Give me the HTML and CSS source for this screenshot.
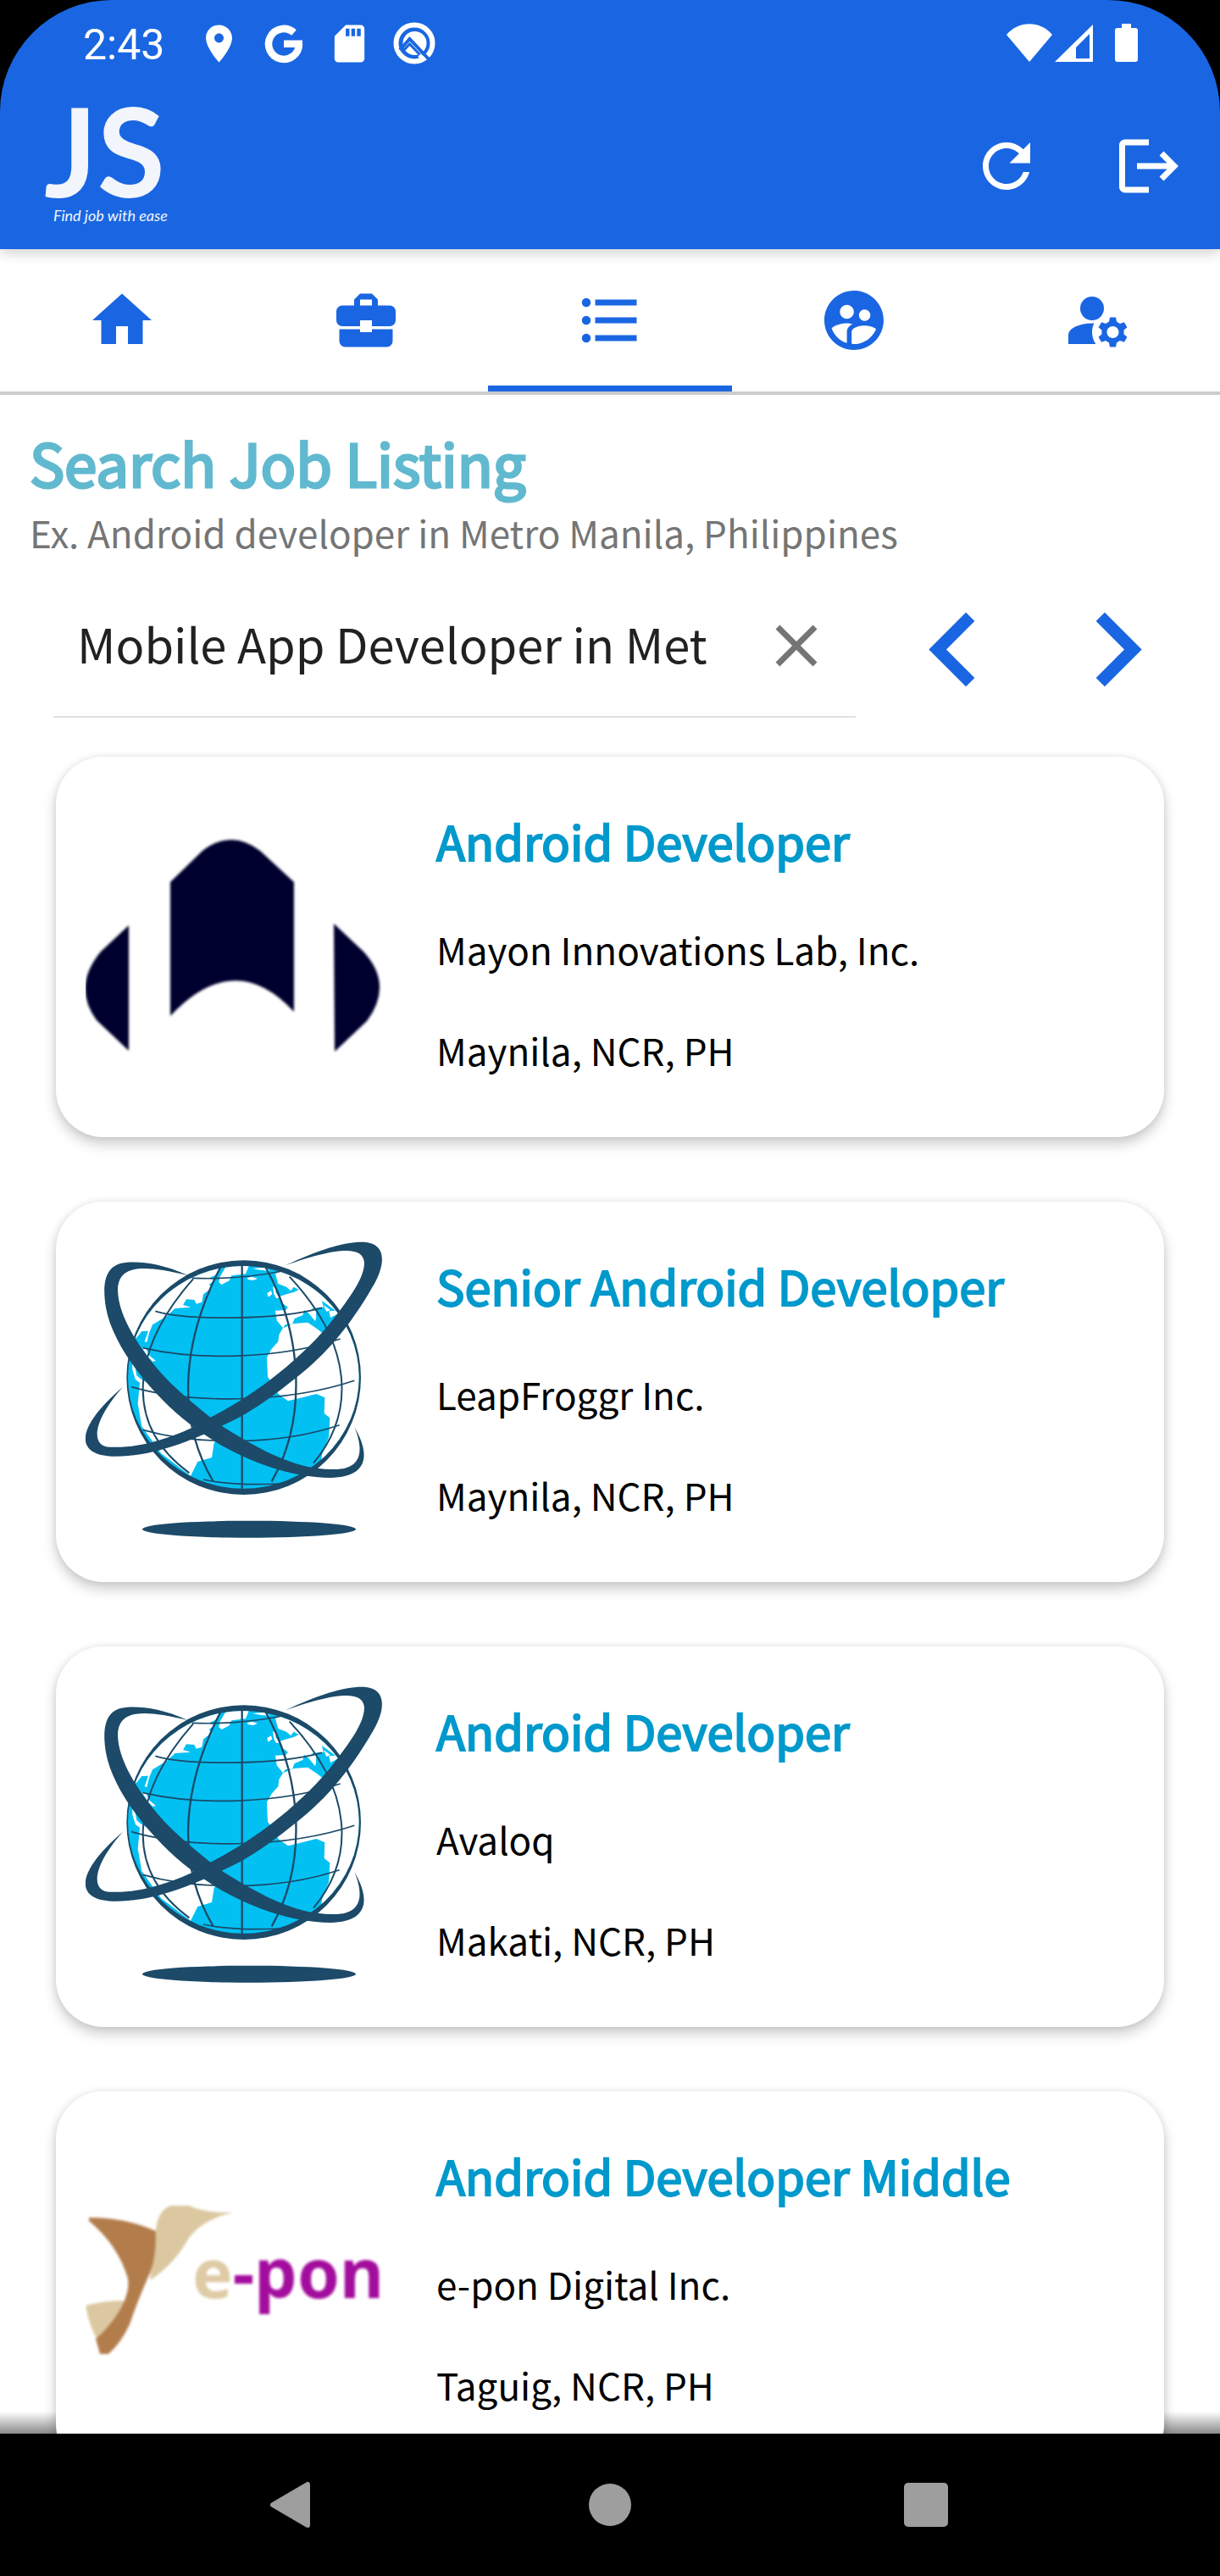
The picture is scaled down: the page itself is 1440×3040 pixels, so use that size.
FILE: index.html
```html
<!DOCTYPE html>
<html lang="en">
<head>
<meta charset="utf-8">
<meta name="viewport" content="width=device-width, initial-scale=1">
<title>Search Job Listing</title>
<link rel="stylesheet" href="styles.css">
</head>
<body>
<svg class="sprite" aria-hidden="true">
  <symbol id="globe" viewBox="63 75 1050 1050">
    <clipPath id="globe-clip"><ellipse cx="622" cy="556" rx="409" ry="394"/></clipPath>
    <circle cx="623" cy="557" r="415" fill="#1c4a68"/>
    <g clip-path="url(#globe-clip)">
      <rect x="200" y="140" width="850" height="840" fill="#03c0f2"/>
      <g fill="#fff">
        <path d="M150 100H560L540 172 528 192 500 205 520 212 500 228 510 240 480 262 475 290 455 296 448 282 420 280 408 300 436 308 380 312 350 340 300 370 288 400 280 432 272 430 285 392 262 393 245 415 210 440Z"/>
        <path d="M228 490 238 515 244 550 256 560 272 570 330 610 440 700 540 760 518 788 510 840 490 846 460 855 435 905 330 825 262 730 248 650 255 575 240 565 229 530ZM262 450 276 452 290 480 312 498 300 500 284 484Z"/>
        <path d="M535 220 538 202 552 178 562 160H642L630 190 580 196 572 214 545 228ZM636 204 652 200 672 207 656 213 638 210ZM655 172 700 166 716 180 680 176Z"/>
        <path d="M706 258 720 250 724 262 710 272ZM726 235 738 238 736 256 752 275 738 276 730 262Z"/>
        <path d="M735 190 760 178 790 195 900 200 1060 330V720L895 880 900 830 925 765 928 700 908 684 910 628 880 615 830 628 780 640 745 615 735 590 708 555 705 485 722 455 745 430 748 405 762 382 740 355 735 320 772 318 780 308 755 290 750 270 775 262 800 255 818 246 800 236 790 250 774 236 745 225Z"/>
      </g>
      <path fill="#03c0f2" d="M762 382 770 370 795 368 803 348 832 336 838 318 878 348 880 320 862 312 905 308 900 285 948 320 925 322 930 345 960 330 905 402 882 384 850 362 800 366Z"/>
      <path fill="#fff" d="M836 308 880 342 876 358ZM905 300 930 318 916 324Z"/>
    </g>
    <g fill="none" stroke="#1c4a68" stroke-width="7">
      <path d="M617 160V950M540 168C420 400 370 680 515 925M700 165C830 400 850 700 722 925"/>
      <path d="M444 208C230 450 190 720 430 895M785 200C1010 440 1020 680 870 860" stroke-width="6"/>
      <path d="M440 205Q600 212 760 180M310 322C420 355 740 355 900 310M265 452C450 495 740 495 965 420M225 590C430 650 770 650 1015 568M265 742C450 795 740 800 962 725M480 918C580 940 700 937 800 930" stroke-width="5"/>
    </g>
    <g fill="#1c4a68">
      <path d="M425 195C320 148 240 144 190 152C130 166 122 230 135 310C160 450 300 620 430 720C570 830 760 910 930 912C1060 910 1075 835 1015 732C1055 830 1030 882 945 882C800 885 660 800 545 728L505 698C420 630 350 570 300 505C210 390 178 310 177 245C180 160 260 155 425 195Z"/>
      <path d="M770 160C890 104 980 75 1050 77C1125 82 1130 150 1080 235C990 390 900 490 790 572C700 645 620 695 545 728C420 790 290 836 170 836C30 836 15 745 195 590C80 720 85 803 150 803C260 808 360 770 440 735L505 698C660 620 830 490 940 350C1010 260 1050 200 1050 150C1045 95 970 90 770 160Z"/>
      <ellipse cx="642" cy="1094" rx="378" ry="30"/>
    </g>
  </symbol>
</svg>

<div class="screen">
  <header class="header">
    <div class="status">
      <span class="clock">2:43</span>
      <svg class="status-icon" viewBox="0 0 24 24" aria-hidden="true"><path d="M12 2C8.130 2 5 5.130 5 9c0 5.250 7 13 7 13s7-7.750 7-13c0-3.870-3.130-7-7-7zm0 9.500a2.500 2.500 0 0 1 0-5 2.500 2.500 0 0 1 0 5z"/></svg>
      <svg class="status-icon" viewBox="0 0 53 53" aria-hidden="true"><path d="M38 13.500A18 18 0 1 0 44 27" fill="none" stroke="#fff" stroke-width="8.500"/><path d="M26 22.500H48V31H26Z"/></svg>
      <svg class="status-icon" viewBox="0 0 24 24" aria-hidden="true"><path d="M18 2h-8L4.020 8 4 20c0 1.100.9 2 2 2h12c1.100 0 2-.9 2-2V4c0-1.100-.9-2-2-2zm-6 6h-2V4h2v4zm3 0h-2V4h2v4zm3 0h-2V4h2v4z"/></svg>
      <svg class="status-icon" viewBox="0 0 53 53" aria-hidden="true"><circle cx="26" cy="26" r="21.500" fill="none" stroke="#fff" stroke-width="6"/><circle cx="26.500" cy="26" r="14"/><path d="M9 34 20.500 21 46 48" fill="none" stroke="#1a66e2" stroke-width="4"/><path d="M13 35 20.500 27 33 40" fill="none" stroke="#1a66e2" stroke-width="3"/><path d="M32 40 38 46" stroke="#fff" stroke-width="5"/></svg>
      <svg class="status-system" viewBox="0 0 156 46" aria-hidden="true"><path d="M27 45 0 13C14-4 40-4 54 13Z"/><path fill-rule="evenodd" d="M57 45 102 1V45ZM82 28V41H98V12Z"/><path d="M136 0H147V5H152Q155 5 155 8V42Q155 45 152 45H131Q128 45 128 42V8Q128 5 131 5H136Z"/></svg>
    </div>
    <div class="appbar">
      <div class="brand">
        <span class="brand-name">JS</span>
        <span class="brand-tag">Find job with ease</span>
      </div>
      <div class="actions">
        <button class="action" type="button" aria-label="Refresh"><svg class="icon" viewBox="0 0 24 24"><path d="M17.650 6.350C16.200 4.900 14.210 4 12 4c-4.420 0-7.990 3.580-7.990 8s3.570 8 7.990 8c3.730 0 6.840-2.550 7.730-6h-2.080c-.82 2.330-3.040 4-5.650 4-3.310 0-6-2.690-6-6s2.690-6 6-6c1.660 0 3.140.69 4.220 1.780L13 11h7V4l-2.350 2.350z"/></svg></button>
        <button class="action" type="button" aria-label="Log out"><svg class="icon" viewBox="0 0 24 24"><path d="M17 7l-1.410 1.410L18.170 11H8v2h10.170l-2.580 2.580L17 17l5-5zM4 5h8V3H4c-1.100 0-2 .9-2 2v14c0 1.100.9 2 2 2h8v-2H4V5z"/></svg></button>
      </div>
    </div>
  </header>

  <nav class="tabs" aria-label="Sections">
    <a class="tab" href="#home" aria-label="Home"><svg class="icon" viewBox="0 0 24 24"><path d="M10 20V14H14V20H19V12H22L12 3 2 12H5V20Z"/></svg></a>
    <a class="tab" href="#work" aria-label="Jobs"><svg class="icon" viewBox="0 0 24 24"><path fill-rule="evenodd" d="M4 7H8V5L10 3H14L16 5V7H20A2 2 0 0 1 22 9V12A2 2 0 0 1 20 14H14V12H10V14H4A2 2 0 0 1 2 12V9A2 2 0 0 1 4 7ZM10 5V7H14V5ZM3 15H10V16H14V15H21V19A2 2 0 0 1 19 21H5A2 2 0 0 1 3 19Z"/></svg></a>
    <a class="tab tab-active" href="#listing" aria-label="Job listing" aria-current="page"><svg class="icon" viewBox="0 0 24 24"><path d="M7 5H21V7H7ZM7 11H21V13H7ZM7 17H21V19H7Z"/><circle cx="4" cy="6" r="1.500"/><circle cx="4" cy="12" r="1.500"/><circle cx="4" cy="18" r="1.500"/></svg></a>
    <a class="tab" href="#people" aria-label="People"><svg class="icon" viewBox="0 0 24 24"><path d="M11.990 2c-5.520 0-10 4.480-10 10s4.480 10 10 10 10-4.480 10-10-4.480-10-10-10zm3.610 6.340c1.070 0 1.930.86 1.930 1.930 0 1.070-.86 1.930-1.930 1.930-1.070 0-1.930-.86-1.930-1.930-.01-1.070.86-1.930 1.930-1.930zm-6-1.580c1.300 0 2.360 1.060 2.360 2.360 0 1.300-1.060 2.360-2.360 2.360s-2.360-1.060-2.360-2.360c0-1.310 1.050-2.360 2.360-2.360zm0 9.130v3.750c-2.400-.75-4.300-2.600-5.140-4.960 1.050-1.120 3.670-1.690 5.140-1.690.53 0 1.200.08 1.900.22-1.640.87-1.900 2.020-1.900 2.680zM11.990 20c-.27 0-.53-.01-.79-.04v-4.070c0-1.420 2.940-2.130 4.400-2.130 1.070 0 2.920.39 3.840 1.150-1.170 2.970-4.060 5.090-7.450 5.090z"/></svg></a>
    <a class="tab" href="#account" aria-label="Account settings"><svg class="icon" viewBox="0 0 24 24"><circle cx="10" cy="8" r="4"/><path d="M10.670 13.020C10.450 13.010 10.230 13 10 13c-4.420 0-8 1.790-8 4v3h9.260C10.470 18.870 10 17.490 10 16c0-1.070.25-2.070.67-2.980zM20.750 16c0-.22-.03-.42-.06-.63l1.140-1.010-1-1.730-1.450.49c-.32-.27-.68-.48-1.080-.63L18 11h-2l-.3 1.490c-.4.150-.76.360-1.080.63l-1.450-.49-1 1.730 1.140 1.010c-.03.210-.06.410-.06.63s.03.420.06.63l-1.140 1.010 1 1.730 1.450-.49c.32.270.68.480 1.080.63L16 21h2l.3-1.490c.4-.15.76-.36 1.080-.63l1.450.49 1-1.730-1.140-1.010c.03-.21.06-.41.06-.63zM17 18c-1.100 0-2-.9-2-2s.9-2 2-2 2 .9 2 2-.9 2-2 2z"/></svg></a>
  </nav>

  <main class="content">
    <h1 class="title">Search Job Listing</h1>
    <label class="hint" for="query">Ex. Android developer in Metro Manila, Philippines</label>
    <form class="search">
      <div class="field">
        <input class="query" id="query" type="text" value="Mobile App Developer in Met">
        <button class="clear" type="reset" aria-label="Clear"><svg class="icon" viewBox="0 0 24 24"><path d="M19 6.410 17.590 5 12 10.590 6.410 5 5 6.410 10.590 12 5 17.590 6.410 19 12 13.410 17.590 19 19 17.590 13.410 12Z"/></svg></button>
      </div>
      <div class="pager">
        <button class="page" type="button" aria-label="Previous page"><svg class="chevron" viewBox="0 0 24 24"><path d="M15.410 16.580 10.830 12 15.410 7.410 14 6 8 12 14 18Z"/></svg></button>
        <button class="page" type="button" aria-label="Next page"><svg class="chevron" viewBox="0 0 24 24"><path d="M8.590 16.580 13.170 12 8.590 7.410 10 6 16 12 10 18Z"/></svg></button>
      </div>
    </form>

    <div class="jobs">
      <article class="card">
        <svg class="logo" viewBox="0 0 350 350" aria-hidden="true">
          <filter id="soft"><feGaussianBlur stdDeviation="1.500"/></filter>
          <g fill="#00002e" filter="url(#soft)">
            <path d="M100 101 138 64Q172 38 206 64L246 101V254Q176 178 100 259Z"/>
            <path d="M51 152 18 183Q-16 224 13 264L51 300Z"/>
            <path d="M293 150 328 183Q364 222 332 265L294 301Z"/>
          </g>
        </svg>
        <div class="info">
          <h2 class="job">Android Developer</h2>
          <p class="line">Mayon Innovations Lab, Inc.</p>
          <p class="line">Maynila, NCR, PH</p>
        </div>
      </article>
      <article class="card">
        <svg class="logo" aria-hidden="true"><use href="#globe"/></svg>
        <div class="info">
          <h2 class="job">Senior Android Developer</h2>
          <p class="line">LeapFroggr Inc.</p>
          <p class="line">Maynila, NCR, PH</p>
        </div>
      </article>
      <article class="card">
        <svg class="logo" aria-hidden="true"><use href="#globe"/></svg>
        <div class="info">
          <h2 class="job">Android Developer</h2>
          <p class="line">Avaloq</p>
          <p class="line">Makati, NCR, PH</p>
        </div>
      </article>
      <article class="card">
        <svg class="logo" viewBox="0 -88 350 350" aria-hidden="true">
          <g filter="url(#soft)">
            <path fill="#dcc8a0" d="M83 28Q86 4 101 0H122Q142 9 174 8Q138 16 122 38Q104 70 76 88ZM0 118Q20 112 46 112Q34 140 13 157Q4 140 0 118Z"/>
            <path fill="#b37d4b" d="M4 14Q48 14 83 30Q84 66 73 86Q60 116 52 140Q42 162 27 175H17L12 157Q34 138 46 112Q52 96 50 86Q38 46 4 18Z"/>
            <text class="logo-text" x="126" y="109"><tspan fill="#dfcba6">e</tspan><tspan fill="#a30f9d">-pon</tspan></text>
          </g>
        </svg>
        <div class="info">
          <h2 class="job">Android Developer Middle</h2>
          <p class="line">e-pon Digital Inc.</p>
          <p class="line">Taguig, NCR, PH</p>
        </div>
      </article>
    </div>
  </main>

  <footer class="navbar">
    <button class="nav-key" type="button" aria-label="Back"><svg class="nav-icon" viewBox="0 0 56 56"><path d="M46 4V52L5 28Z" stroke="#9e9e9e" stroke-width="6" stroke-linejoin="round"/></svg></button>
    <button class="nav-key" type="button" aria-label="Home"><svg class="nav-icon" viewBox="0 0 56 56"><circle cx="28" cy="28" r="25"/></svg></button>
    <button class="nav-key" type="button" aria-label="Recent apps"><svg class="nav-icon" viewBox="0 0 56 56"><rect y="2" width="52" height="52" rx="5"/></svg></button>
  </footer>
</div>
</body>
</html>
```
FILE: styles.css
```css
* {
  box-sizing: border-box;
}

body {
  margin: 0;
  background: #000;
  font-family: "Noto Sans CJK JP", "Noto Sans", sans-serif;
}

h1,
h2,
p {
  margin: 0;
}

button {
  display: flex;
  align-items: center;
  justify-content: center;
  padding: 0;
  border: 0;
  background: none;
  fill: currentColor;
}

svg {
  display: block;
  flex: none;
}

.sprite {
  position: absolute;
  width: 0;
  height: 0;
}

.screen {
  display: flex;
  flex-direction: column;
  height: 100vh;
}

.icon {
  width: 84px;
  height: 84px;
}

/* Header */

.header {
  position: relative;
  z-index: 1;
  flex: none;
  border-radius: 132px 132px 0 0;
  background: #1a66e2;
  color: #fff;
  box-shadow: 0 4px 16px rgba(0, 0, 0, 0.2);
}

.status {
  display: flex;
  align-items: center;
  gap: 24px;
  height: 102px;
  padding: 0 96px 0 98px;
  fill: #fff;
}

.clock {
  margin-right: 14px;
  font: 50px/56px Roboto, sans-serif;
  padding-top: 4px;
}

.status-icon {
  width: 53px;
  height: 53px;
}

.status-system {
  width: 156px;
  height: 46px;
  margin-left: auto;
}

.appbar {
  display: flex;
  justify-content: space-between;
  height: 192px;
}

.brand {
  display: flex;
  flex-direction: column;
  gap: 10px;
  padding: 20px 0 0 52px;
  color: #f2f6fc;
  font-family: Lato, sans-serif;
}

.brand-name {
  font-size: 146px;
  font-weight: 700;
  line-height: 110px;
}

.brand-tag {
  padding-left: 11px;
  font-size: 18px;
  font-style: italic;
  line-height: 24px;
}

.actions {
  display: flex;
  padding-bottom: 4px;
}

.action {
  width: 168px;
  color: #fff;
}

/* Section tabs */

.tabs {
  display: grid;
  grid-template-columns: repeat(5, 1fr);
  flex: none;
  height: 172px;
  border-bottom: 4px solid #ccc;
  background: #fff;
}

.tab {
  display: flex;
  align-items: center;
  justify-content: center;
  fill: #1a66e2;
}

.tab-active {
  box-shadow: inset 0 -7px #1a66e2;
}

/* Search */

.content {
  display: flex;
  flex: 1;
  flex-direction: column;
  min-height: 0;
  padding-top: 31px;
  background: #fff;
}

.title {
  padding: 0 35px;
  color: #61b9cf;
  font-size: 69px;
  font-weight: 400;
  line-height: 96px;
  -webkit-text-stroke: 3px #61b9cf;
}

.hint {
  padding: 0 35px;
  color: #757575;
  font-size: 44px;
  line-height: 70px;
}

.search {
  display: flex;
  align-items: flex-start;
  gap: 28px;
  padding: 16px 34px 0 63px;
}

.field {
  display: flex;
  flex: 1;
  align-items: center;
  height: 168px;
  padding: 0 28px;
  border-bottom: 2px solid #e0e0e0;
}

.query {
  flex: 1;
  min-width: 0;
  height: 120px;
  padding: 0 0 8px;
  border: 0;
  outline: 0;
  background: none;
  color: #212121;
  font: 56px "Noto Sans CJK JP", "Noto Sans", sans-serif;
}

.clear {
  color: #757575;
}

.pager {
  display: flex;
  gap: 18px;
}

.page {
  color: #1a66e2;
}

.chevron {
  width: 175px;
  height: 175px;
}

/* Job cards */

.jobs {
  display: flex;
  flex: 1;
  flex-direction: column;
  gap: 76px;
  min-height: 0;
  padding: 39px 66px 0;
  overflow: hidden;
  background: linear-gradient(to top, #8a8a8a, #fff 26px);
}

.card {
  display: flex;
  flex: none;
  gap: 64px;
  padding: 47px 35px 52px;
  border-radius: 56px;
  background: #fff;
  box-shadow: 0 8px 16px rgba(0, 0, 0, 0.2), 0 0 8px rgba(0, 0, 0, 0.08);
}

.logo {
  width: 350px;
  height: 350px;
}

.logo-text {
  font: 700 80px "Noto Sans", sans-serif;
}

.info {
  display: flex;
  flex-direction: column;
  gap: 59px;
  padding-top: 13px;
}

.job {
  color: #0099cc;
  font-size: 56px;
  font-weight: 400;
  line-height: 78px;
  -webkit-text-stroke: 2px #0099cc;
}

.line {
  color: #000;
  font-size: 44px;
  line-height: 60px;
}

/* System navigation */

.navbar {
  display: grid;
  grid-template-columns: repeat(3, 375px);
  flex: none;
  justify-content: center;
  height: 168px;
  background: #000;
}

.nav-key {
  color: #9e9e9e;
}

.nav-icon {
  width: 56px;
  height: 56px;
}
```
